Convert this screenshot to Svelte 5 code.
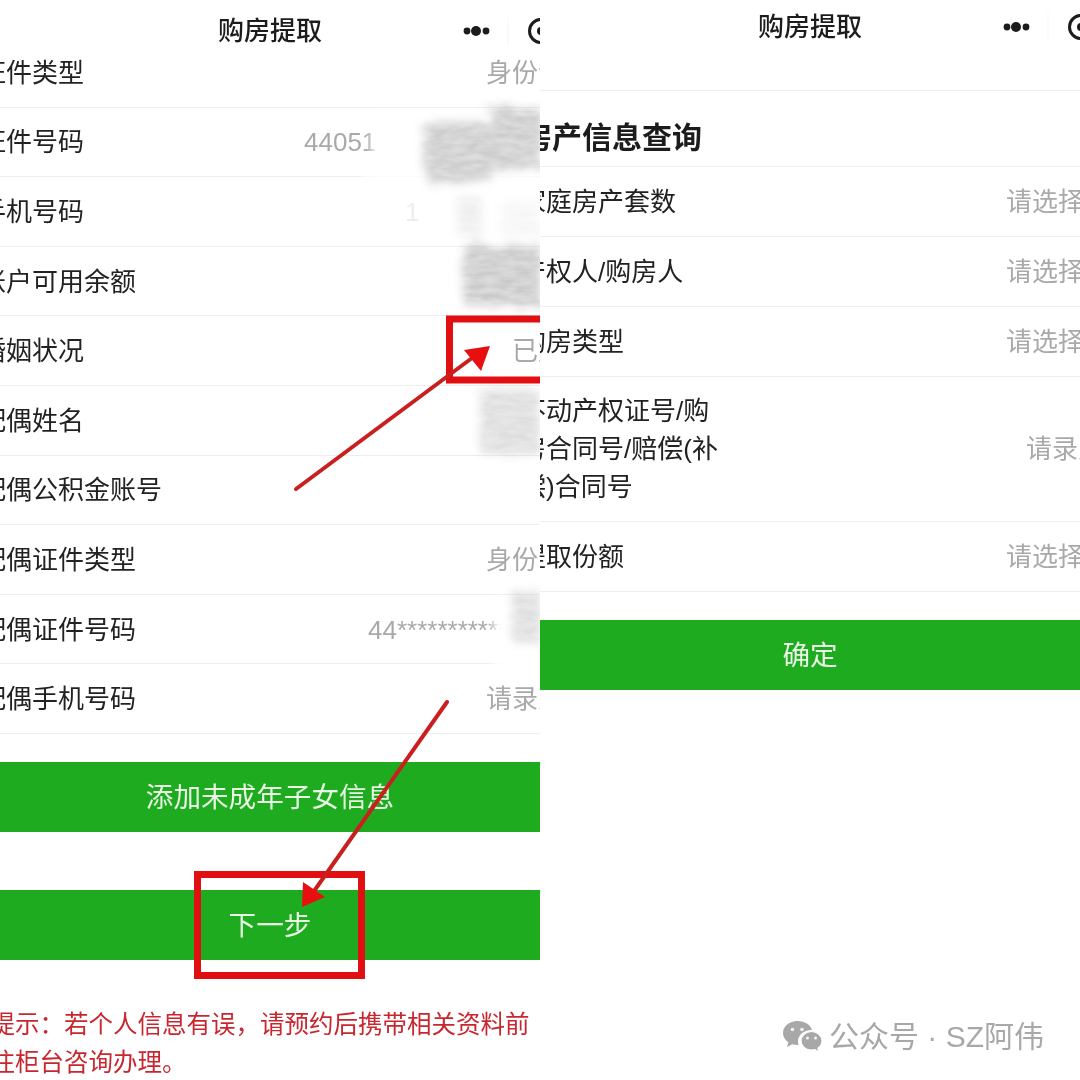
<script>
	const leftRows = [
		{ label: '证件类型', value: '身份证' },
		{ label: '证件号码', value: '44051', width: 260 },
		{ label: '手机号码', value: '1', width: 159 },
		{ label: '账户可用余额' },
		{ label: '婚姻状况', value: '已婚' },
		{ label: '配偶姓名' },
		{ label: '配偶公积金账号' },
		{ label: '配偶证件类型', value: '身份证' },
		{ label: '配偶证件号码', value: '44*****************', width: 196 },
		{ label: '配偶手机号码', value: '请录入' }
	];

	const rightRows = [
		{ label: ['家庭房产套数'], value: '请选择', select: true },
		{ label: ['产权人/购房人'], value: '请选择', select: true },
		{ label: ['购房类型'], value: '请选择', select: true },
		{ label: ['不动产权证号/购', '房合同号/赔偿(补', '偿)合同号'], value: '请录入' },
		{ label: ['提取份额'], value: '请选择', select: true }
	];

	// 打码的涂抹区域
	const whiteouts = [
		[372, 114, 170, 54, 1],
		[364, 170, 180, 70, 0.8],
		[494, 600, 50, 72, 1]
	];
	const smudges = [
		[426, 122, 66, 60, 0.9],
		[488, 108, 54, 62, 0.9],
		[458, 196, 24, 42, 0.3],
		[500, 200, 40, 36, 0.15],
		[464, 246, 78, 60, 0.95],
		[480, 390, 60, 64, 0.6],
		[512, 590, 28, 54, 0.6]
	];
</script>

{#snippet navbar()}
	<div class="title">购房提取</div>
	<svg class="capsule" viewBox="0 0 100 30" aria-hidden="true">
		<circle cx="11" cy="15" r="3.4" />
		<circle cx="20" cy="15" r="5" />
		<circle cx="30" cy="15" r="3.4" />
		<path class="divider" d="M52 1v28" />
		<circle class="ring" cx="85" cy="15" r="11.500" />
		<circle cx="85" cy="15" r="4" />
	</svg>
{/snippet}

<div class="page">
	<section class="panel">
		<header class="nav nav-left">
			{@render navbar()}
		</header>

		<div class="list list-left">
			{#each leftRows as row}
				<div class="row">
					<span class="label">{row.label}</span>
					{#if row.value}
						<span class="value" class:masked={row.width} style:width={row.width ? row.width + 'px' : null}>{row.value}</span>
					{/if}
				</div>
			{/each}
		</div>

		<button class="btn btn-add">添加未成年子女信息</button>
		<button class="btn btn-next">下一步</button>

		<p class="tip">提示&#xFF1A;若个人信息有误&#xFF0C;请预约后携带相关资料前往柜台咨询办理。</p>

		<!-- 打码和标注都盖在内容上面 -->
		<svg class="overlay" viewBox="0 0 540 1080" aria-hidden="true">
			<defs>
				<filter id="soft" x="-20%" y="-20%" width="140%" height="140%">
					<feGaussianBlur stdDeviation="5" />
				</filter>
				<filter id="rough" x="-30%" y="-30%" width="160%" height="160%">
					<feTurbulence type="fractalNoise" baseFrequency="0.06 0.18" numOctaves="2" seed="7" result="noise" />
					<feDisplacementMap in="SourceGraphic" in2="noise" scale="18" result="shape" />
					<feGaussianBlur in="shape" stdDeviation="4" result="soft" />
					<feColorMatrix in="noise" type="matrix" values="0 0 0 0 0  0 0 0 0 0  0 0 0 0 0  0.6 0 0 0 0.5" result="grain" />
					<feComposite in="soft" in2="grain" operator="in" />
				</filter>
			</defs>
			{#each whiteouts as [x, y, w, h, o]}
				<rect {x} {y} width={w} height={h} fill="#fff" opacity={o} filter="url(#soft)" />
			{/each}
			{#each smudges as [x, y, w, h, o]}
				<rect {x} {y} width={w} height={h} fill="#c4c4c4" opacity={o} filter="url(#rough)" />
			{/each}

			<rect class="mark" x="449.500" y="319" width="110" height="61" />
			<rect class="mark" x="197.500" y="874.500" width="164" height="101" />

			<path class="shaft" d="M296 489 472 358" />
			<path class="head" d="M490 346 464 350 481 371Z" />
			<path class="shaft" d="M447 702 312 894" />
			<path class="head" d="M302 907 325 897 303 882Z" />
		</svg>
	</section>

	<section class="panel">
		<header class="nav nav-right">
			{@render navbar()}
		</header>
		<div class="spacer"></div>
		<h2 class="heading">房产信息查询</h2>

		<div class="list">
			{#each rightRows as row}
				<div class="row">
					<span class="label">
						{#each row.label as line}
							<span class="line">{line}</span>
						{/each}
					</span>
					<span class="value" class:select={row.select}>{row.value}</span>
				</div>
			{/each}
		</div>

		<button class="btn btn-ok">确定</button>

		<div class="watermark">
			<svg class="wechat" viewBox="0 0 40 34" aria-hidden="true">
				<path d="M15.500 1C7.400 1 1 6.400 1 13c0 3.800 2.100 7.100 5.400 9.300L5 27l5.200-2.700c1.700.5 3.500.8 5.300.8h1.100c-.4-1.200-.6-2.400-.6-3.700 0-6.300 5.900-11.300 13.200-11.300h.9C28.600 4.700 22.600 1 15.500 1Z" />
				<path class="front" d="M29.500 11.500c-5.800 0-10.500 4.100-10.500 9.300s4.700 9.300 10.500 9.300c1.200 0 2.400-.2 3.500-.5l4 2.400-1-3.800c2.500-1.700 4-4.400 4-7.400 0-5.200-4.700-9.300-10.500-9.300Z" />
				<circle class="eye" cx="10.500" cy="9.500" r="1.800" />
				<circle class="eye" cx="20" cy="9.500" r="1.800" />
				<circle class="eye" cx="25.500" cy="18" r="1.500" />
				<circle class="eye" cx="33.500" cy="18" r="1.500" />
			</svg>
			<span>公众号 · SZ阿伟</span>
		</div>
	</section>
</div>

<style>
	:global(body) {
		margin: 0;
		background: #fff;
	}

	.page {
		display: flex;
		width: 1080px;
		height: 1080px;
		overflow: hidden;
		background: #fff;
		color: #222;
		font-family: 'Liberation Sans', 'Noto Sans CJK SC', sans-serif;
		font-size: 26px;
		filter: blur(0.5px);
	}

	.panel {
		position: relative;
		flex: 0 0 540px;
		width: 540px;
		height: 1080px;
		overflow: hidden;
	}

	/* Navigation */
	.nav {
		position: relative;
		z-index: 1;
		display: grid;
		grid-template-columns: minmax(0, 1fr) auto minmax(0, 1fr);
		align-items: center;
		box-sizing: border-box;
		background: #fff;
	}

	.nav-left {
		height: 56px;
		padding-top: 6px;
	}

	.nav-right {
		height: 54px;
	}

	.title {
		grid-column: 2;
		font-weight: 500;
		line-height: 1;
		color: #1c1c1c;
	}

	.capsule {
		grid-column: 3;
		width: 100px;
		height: 30px;
		margin-left: 134px;
		overflow: visible;
		fill: #1c1c1c;
	}

	.divider {
		fill: none;
		stroke: #f5f5f5;
		stroke-width: 1;
	}

	.ring {
		fill: none;
		stroke: #1c1c1c;
		stroke-width: 3;
	}

	/* Form rows */
	.list {
		position: relative;
		width: 584px;
		margin-left: -20px;
	}

	.list-left {
		margin-top: -18px;
	}

	.row {
		display: flex;
		align-items: center;
		justify-content: space-between;
		box-sizing: border-box;
		min-height: 69.600px;
		padding-top: 1px;
		border-bottom: 1px solid #eeeeee;
	}

	.panel:last-child .row {
		min-height: 70px;
	}

	.panel:last-child .row:nth-child(4) {
		padding: 15px 0;
	}

	.label {
		display: block;
		line-height: 38px;
		white-space: nowrap;
		color: #222;
	}

	.line {
		display: block;
	}

	.value {
		line-height: 38px;
		white-space: nowrap;
		color: #a9a9a9;
	}

	.masked {
		text-align: left;
	}

	.select {
		margin-right: 20px;
	}

	.spacer {
		height: 36px;
		border-bottom: 1px solid #eeeeee;
	}

	.heading {
		display: flex;
		align-items: center;
		box-sizing: border-box;
		height: 76px;
		margin: 0 0 0 -18px;
		padding-top: 12px;
		border-bottom: 1px solid #eeeeee;
		font-size: 30px;
		font-weight: 700;
		color: #1c1c1c;
	}

	/* Buttons */
	.btn {
		display: block;
		width: 100%;
		height: 70px;
		padding: 0 0 4px;
		border: none;
		background: #1fab20;
		color: #e8f8e4;
		font: inherit;
		font-size: 27.600px;
		cursor: pointer;
	}

	.btn-add {
		margin-top: 28px;
	}

	.btn-next {
		margin-top: 58px;
	}

	.btn-ok {
		margin-top: 28px;
	}

	.tip {
		width: 545px;
		margin: 46px 0 0 -9.500px;
		font-size: 24.500px;
		line-height: 38px;
		color: #c8272f;
	}

	/* Annotations */
	.overlay {
		position: absolute;
		inset: 0;
		width: 540px;
		height: 1080px;
		pointer-events: none;
	}

	.mark {
		fill: none;
		stroke: #e20f12;
		stroke-width: 7;
	}

	.shaft {
		fill: none;
		stroke: #c9201f;
		stroke-width: 4;
		stroke-linecap: round;
	}

	.head {
		fill: #e80f10;
	}

	.watermark {
		position: absolute;
		top: 1018px;
		left: 242px;
		display: flex;
		align-items: center;
		gap: 7px;
		font-size: 30px;
		line-height: 38px;
		white-space: nowrap;
		color: #a8a8a8;
	}

	.wechat {
		width: 40px;
		height: 34px;
		fill: #a8a8a8;
	}

	.front {
		stroke: #fff;
		stroke-width: 1.200;
	}

	.eye {
		fill: #f4f4f4;
	}
</style>
